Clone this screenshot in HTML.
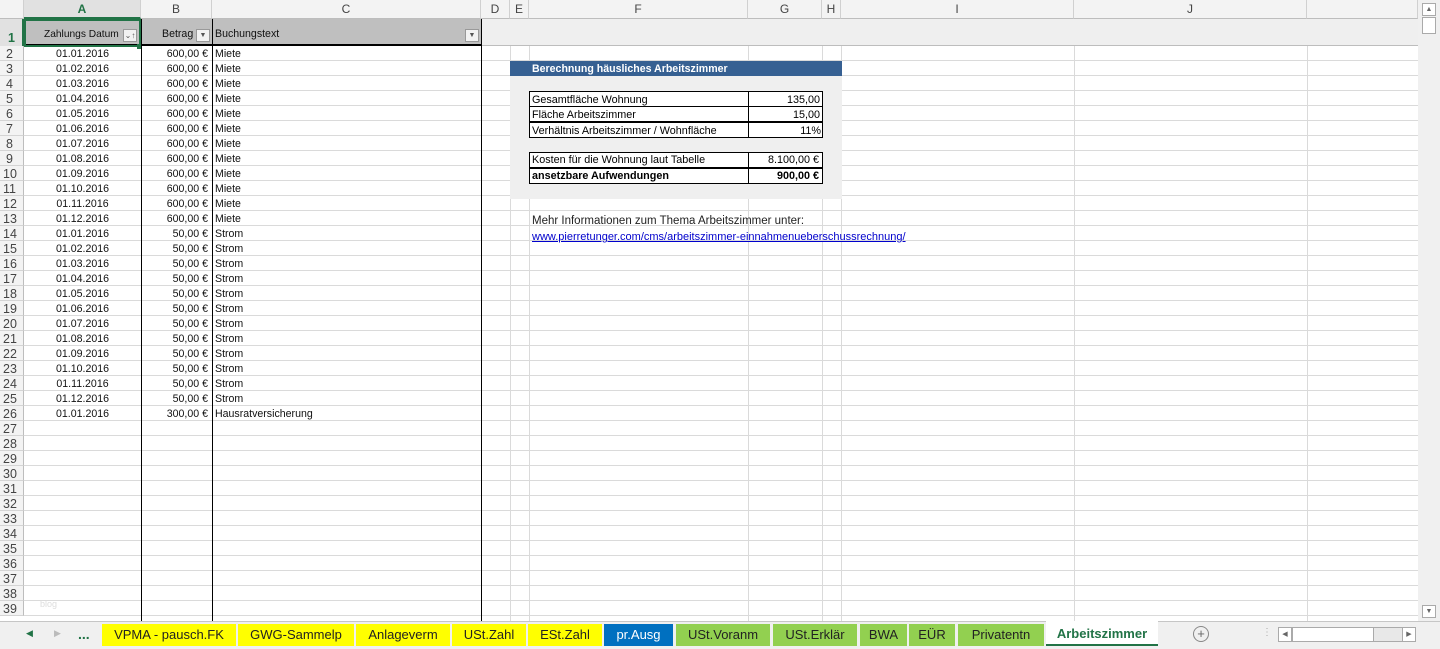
<!DOCTYPE html>
<html><head><meta charset="utf-8"><style>
*{margin:0;padding:0;box-sizing:border-box}
body{width:1440px;height:649px;overflow:hidden;background:#fff;font-family:"Liberation Sans",sans-serif;position:relative}
.a{position:absolute}
.grid{left:24px;top:46px;width:1394px;height:575px;background:repeating-linear-gradient(to bottom,transparent 0 14px,#dadada 14px 15px)}
.vl{position:absolute;top:19px;width:1px;height:602px;background:#dadada}
.bk{position:absolute;top:19px;width:1px;height:602px;background:#000}
.ch{position:absolute;top:0;height:19px;background:#f3f3f3;border-right:1px solid #d0d0d0;border-bottom:1px solid #bdbdbd;font-size:12px;color:#444;text-align:center;line-height:19px}
.rh{position:absolute;left:0;width:24px;height:15px;background:#f3f3f3;border-bottom:1px solid #d4d4d4;border-right:1px solid #bdbdbd;font-size:12.5px;color:#444;line-height:16px;padding-left:6px}
.r{position:absolute;height:15px;font-size:10.6px;line-height:17px;color:#111}
.d{left:24px;width:117px;text-align:center}
.b{left:141px;width:67px;text-align:right}
.c{left:215px}
.tab{position:absolute;top:624px;height:22px;font-size:13px;line-height:22px;text-align:center;color:#222}
.y{background:#ffff00}.g{background:#92d050}
.box{font-size:10.8px;line-height:16px}
</style></head><body>
<div class="a grid"></div>
<div class="vl" style="left:510px"></div><div class="vl" style="left:529px"></div><div class="vl" style="left:748px"></div><div class="vl" style="left:822px"></div><div class="vl" style="left:841px"></div><div class="vl" style="left:1074px"></div><div class="vl" style="left:1307px"></div>
<div class="ch" style="left:0;width:24px"></div>
<div class="ch" style="left:24px;width:117px;color:#217346;font-weight:bold;background:#e1e1e1;border-bottom:2px solid #217346">A</div>
<div class="ch" style="left:141px;width:71px">B</div>
<div class="ch" style="left:212px;width:269px">C</div>
<div class="ch" style="left:481px;width:29px">D</div>
<div class="ch" style="left:510px;width:19px">E</div>
<div class="ch" style="left:529px;width:219px">F</div>
<div class="ch" style="left:748px;width:74px">G</div>
<div class="ch" style="left:822px;width:19px">H</div>
<div class="ch" style="left:841px;width:233px">I</div>
<div class="ch" style="left:1074px;width:233px">J</div>
<div class="ch" style="left:1307px;width:111px"></div>
<div class="a" style="left:0;top:19px;width:24px;height:27px;background:#e1e1e1;border-right:2px solid #217346;color:#217346;font-weight:bold;font-size:12.5px;padding:12px 0 0 8px">1</div>
<div class="a" style="left:24px;top:19px;width:457px;height:27px;background:#bfbfbf;border-bottom:2px solid #000"></div>
<div class="a" style="left:481px;top:19px;width:937px;height:27px;background:#efefef;border-bottom:1px solid #bdbdbd"></div>
<div class="a" style="left:24px;top:19px;width:117px;height:28px;border:2px solid #217346"></div>
<div class="a" style="left:137px;top:44px;width:5px;height:5px;background:#217346"></div>
<div class="r" style="left:44px;top:26px;font-size:10.2px">Zahlungs Datum</div>
<div class="a" style="left:123px;top:29px;width:14px;height:13px;background:#f2f2f2;border:1px solid #999;font-size:8px;text-align:center;line-height:12px;color:#555">⌄↑</div>
<div class="r" style="left:162px;top:26px">Betrag</div>
<div class="a" style="left:196px;top:29px;width:14px;height:13px;background:#f2f2f2;border:1px solid #999;font-size:7px;text-align:center;line-height:12px;color:#555">▼</div>
<div class="r" style="left:215px;top:26px">Buchungstext</div>
<div class="a" style="left:465px;top:29px;width:14px;height:13px;background:#f2f2f2;border:1px solid #999;font-size:7px;text-align:center;line-height:12px;color:#555">▼</div>
<div class="bk" style="left:141px"></div><div class="bk" style="left:212px"></div><div class="bk" style="left:481px"></div>
<div class="rh" style="top:46px">2</div><div class="rh" style="top:61px">3</div><div class="rh" style="top:76px">4</div><div class="rh" style="top:91px">5</div><div class="rh" style="top:106px">6</div><div class="rh" style="top:121px">7</div><div class="rh" style="top:136px">8</div><div class="rh" style="top:151px">9</div><div class="rh" style="top:166px;padding-left:3px">10</div><div class="rh" style="top:181px;padding-left:3px">11</div><div class="rh" style="top:196px;padding-left:3px">12</div><div class="rh" style="top:211px;padding-left:3px">13</div><div class="rh" style="top:226px;padding-left:3px">14</div><div class="rh" style="top:241px;padding-left:3px">15</div><div class="rh" style="top:256px;padding-left:3px">16</div><div class="rh" style="top:271px;padding-left:3px">17</div><div class="rh" style="top:286px;padding-left:3px">18</div><div class="rh" style="top:301px;padding-left:3px">19</div><div class="rh" style="top:316px;padding-left:3px">20</div><div class="rh" style="top:331px;padding-left:3px">21</div><div class="rh" style="top:346px;padding-left:3px">22</div><div class="rh" style="top:361px;padding-left:3px">23</div><div class="rh" style="top:376px;padding-left:3px">24</div><div class="rh" style="top:391px;padding-left:3px">25</div><div class="rh" style="top:406px;padding-left:3px">26</div><div class="rh" style="top:421px;padding-left:3px">27</div><div class="rh" style="top:436px;padding-left:3px">28</div><div class="rh" style="top:451px;padding-left:3px">29</div><div class="rh" style="top:466px;padding-left:3px">30</div><div class="rh" style="top:481px;padding-left:3px">31</div><div class="rh" style="top:496px;padding-left:3px">32</div><div class="rh" style="top:511px;padding-left:3px">33</div><div class="rh" style="top:526px;padding-left:3px">34</div><div class="rh" style="top:541px;padding-left:3px">35</div><div class="rh" style="top:556px;padding-left:3px">36</div><div class="rh" style="top:571px;padding-left:3px">37</div><div class="rh" style="top:586px;padding-left:3px">38</div><div class="rh" style="top:601px;padding-left:3px">39</div>
<div class="r d" style="top:46px">01.01.2016</div><div class="r b" style="top:46px">600,00 €</div><div class="r c" style="top:46px">Miete</div>
<div class="r d" style="top:61px">01.02.2016</div><div class="r b" style="top:61px">600,00 €</div><div class="r c" style="top:61px">Miete</div>
<div class="r d" style="top:76px">01.03.2016</div><div class="r b" style="top:76px">600,00 €</div><div class="r c" style="top:76px">Miete</div>
<div class="r d" style="top:91px">01.04.2016</div><div class="r b" style="top:91px">600,00 €</div><div class="r c" style="top:91px">Miete</div>
<div class="r d" style="top:106px">01.05.2016</div><div class="r b" style="top:106px">600,00 €</div><div class="r c" style="top:106px">Miete</div>
<div class="r d" style="top:121px">01.06.2016</div><div class="r b" style="top:121px">600,00 €</div><div class="r c" style="top:121px">Miete</div>
<div class="r d" style="top:136px">01.07.2016</div><div class="r b" style="top:136px">600,00 €</div><div class="r c" style="top:136px">Miete</div>
<div class="r d" style="top:151px">01.08.2016</div><div class="r b" style="top:151px">600,00 €</div><div class="r c" style="top:151px">Miete</div>
<div class="r d" style="top:166px">01.09.2016</div><div class="r b" style="top:166px">600,00 €</div><div class="r c" style="top:166px">Miete</div>
<div class="r d" style="top:181px">01.10.2016</div><div class="r b" style="top:181px">600,00 €</div><div class="r c" style="top:181px">Miete</div>
<div class="r d" style="top:196px">01.11.2016</div><div class="r b" style="top:196px">600,00 €</div><div class="r c" style="top:196px">Miete</div>
<div class="r d" style="top:211px">01.12.2016</div><div class="r b" style="top:211px">600,00 €</div><div class="r c" style="top:211px">Miete</div>
<div class="r d" style="top:226px">01.01.2016</div><div class="r b" style="top:226px">50,00 €</div><div class="r c" style="top:226px">Strom</div>
<div class="r d" style="top:241px">01.02.2016</div><div class="r b" style="top:241px">50,00 €</div><div class="r c" style="top:241px">Strom</div>
<div class="r d" style="top:256px">01.03.2016</div><div class="r b" style="top:256px">50,00 €</div><div class="r c" style="top:256px">Strom</div>
<div class="r d" style="top:271px">01.04.2016</div><div class="r b" style="top:271px">50,00 €</div><div class="r c" style="top:271px">Strom</div>
<div class="r d" style="top:286px">01.05.2016</div><div class="r b" style="top:286px">50,00 €</div><div class="r c" style="top:286px">Strom</div>
<div class="r d" style="top:301px">01.06.2016</div><div class="r b" style="top:301px">50,00 €</div><div class="r c" style="top:301px">Strom</div>
<div class="r d" style="top:316px">01.07.2016</div><div class="r b" style="top:316px">50,00 €</div><div class="r c" style="top:316px">Strom</div>
<div class="r d" style="top:331px">01.08.2016</div><div class="r b" style="top:331px">50,00 €</div><div class="r c" style="top:331px">Strom</div>
<div class="r d" style="top:346px">01.09.2016</div><div class="r b" style="top:346px">50,00 €</div><div class="r c" style="top:346px">Strom</div>
<div class="r d" style="top:361px">01.10.2016</div><div class="r b" style="top:361px">50,00 €</div><div class="r c" style="top:361px">Strom</div>
<div class="r d" style="top:376px">01.11.2016</div><div class="r b" style="top:376px">50,00 €</div><div class="r c" style="top:376px">Strom</div>
<div class="r d" style="top:391px">01.12.2016</div><div class="r b" style="top:391px">50,00 €</div><div class="r c" style="top:391px">Strom</div>
<div class="r d" style="top:406px">01.01.2016</div><div class="r b" style="top:406px">300,00 €</div><div class="r c" style="top:406px">Hausratversicherung</div>
<div class="r" style="left:40px;top:596px;color:#ddd;font-size:9px">blog</div>
<div class="a" style="left:510px;top:61px;width:332px;height:15px;background:#366092;color:#fff;font-size:10.6px;font-weight:bold;line-height:17px;padding-left:22px">Berechnung häusliches Arbeitszimmer</div>
<div class="a" style="left:510px;top:76px;width:332px;height:123px;background:#efefef"></div>
<div class="a box" style="left:529px;top:91px;width:294px;height:47px;border:1px solid #000;background:#fff"></div>
<div class="a" style="left:529px;top:106px;width:294px;height:1px;background:#000"></div>
<div class="a" style="left:529px;top:121px;width:294px;height:2px;background:#000"></div>
<div class="a" style="left:748px;top:91px;width:1px;height:47px;background:#000"></div>
<div class="a box" style="left:532px;top:92px">Gesamtfläche Wohnung</div><div class="a box" style="left:749px;top:92px;width:71px;text-align:right">135,00</div>
<div class="a box" style="left:532px;top:107px">Fläche Arbeitszimmer</div><div class="a box" style="left:749px;top:107px;width:71px;text-align:right">15,00</div>
<div class="a box" style="left:532px;top:123px">Verhältnis Arbeitszimmer / Wohnfläche</div><div class="a box" style="left:749px;top:123px;width:72px;text-align:right">11%</div>
<div class="a" style="left:529px;top:152px;width:294px;height:32px;border:1px solid #000;background:#fff"></div>
<div class="a" style="left:529px;top:167px;width:294px;height:2px;background:#000"></div>
<div class="a" style="left:748px;top:152px;width:1px;height:32px;background:#000"></div>
<div class="a box" style="left:532px;top:152px">Kosten für die Wohnung laut Tabelle</div><div class="a box" style="left:749px;top:152px;width:70px;text-align:right">8.100,00 €</div>
<div class="a box" style="left:532px;top:168px;font-weight:bold">ansetzbare Aufwendungen</div><div class="a box" style="left:749px;top:168px;width:70px;text-align:right;font-weight:bold">900,00 €</div>
<div class="a box" style="left:532px;top:213px;color:#222;font-size:11.5px">Mehr Informationen zum Thema Arbeitszimmer unter:</div>
<div class="a box" style="left:532px;top:229px;color:#0000cc;text-decoration:underline;font-size:11px">www.pierretunger.com/cms/arbeitszimmer-einnahmenueberschussrechnung/</div>
<div class="a" style="left:1418px;top:0;width:22px;height:621px;background:#f0f0f0"></div>
<div class="a" style="left:1422px;top:3px;width:14px;height:13px;border:1px solid #aaa;background:#fff;font-size:7px;text-align:center;line-height:11px;color:#666">▲</div>
<div class="a" style="left:1422px;top:17px;width:14px;height:17px;border:1px solid #aaa;background:#fff"></div>
<div class="a" style="left:1422px;top:605px;width:14px;height:13px;border:1px solid #aaa;background:#fff;font-size:7px;text-align:center;line-height:11px;color:#666">▼</div>
<div class="a" style="left:0;top:621px;width:1440px;height:28px;background:#f0f0f0;border-top:1px solid #c6c6c6"></div>
<div class="a" style="left:26px;top:628px;font-size:9px;color:#217346">◀</div>
<div class="a" style="left:54px;top:628px;font-size:9px;color:#bbb">▶</div>
<div class="a" style="left:78px;top:626px;font-size:14px;color:#217346;font-weight:bold">...</div>
<div class="tab y" style="left:102px;width:134px">VPMA - pausch.FK</div>
<div class="tab y" style="left:238px;width:116px">GWG-Sammelp</div>
<div class="tab y" style="left:356px;width:94px">Anlageverm</div>
<div class="tab y" style="left:452px;width:74px">USt.Zahl</div>
<div class="tab y" style="left:528px;width:74px">ESt.Zahl</div>
<div class="tab" style="left:604px;width:69px;background:#0070c0;color:#fff">pr.Ausg</div>
<div class="tab g" style="left:676px;width:94px">USt.Voranm</div>
<div class="tab g" style="left:773px;width:84px">USt.Erklär</div>
<div class="tab g" style="left:860px;width:47px">BWA</div>
<div class="tab g" style="left:909px;width:46px">EÜR</div>
<div class="tab g" style="left:958px;width:86px">Privatentn</div>
<div class="tab" style="left:1046px;top:621px;height:25px;width:112px;background:#fff;color:#217346;font-weight:bold;line-height:26px;border-bottom:2px solid #217346">Arbeitszimmer</div>
<div class="a" style="left:1193px;top:626px;width:16px;height:16px;border:1px solid #888;border-radius:50%;font-size:13px;line-height:13px;text-align:center;color:#666">+</div>
<div class="a" style="left:1262px;top:627px;font-size:10px;color:#aaa">⋮</div>
<div class="a" style="left:1278px;top:627px;width:138px;height:15px;border:1px solid #aaa;background:#e8e8e8"></div>
<div class="a" style="left:1278px;top:627px;width:14px;height:15px;border:1px solid #aaa;background:#fff;font-size:7px;line-height:13px;text-align:center;color:#666">◀</div>
<div class="a" style="left:1292px;top:627px;width:82px;height:15px;border:1px solid #aaa;background:#fff"></div>
<div class="a" style="left:1402px;top:627px;width:14px;height:15px;border:1px solid #aaa;background:#fff;font-size:7px;line-height:13px;text-align:center;color:#666">▶</div>
</body></html>
